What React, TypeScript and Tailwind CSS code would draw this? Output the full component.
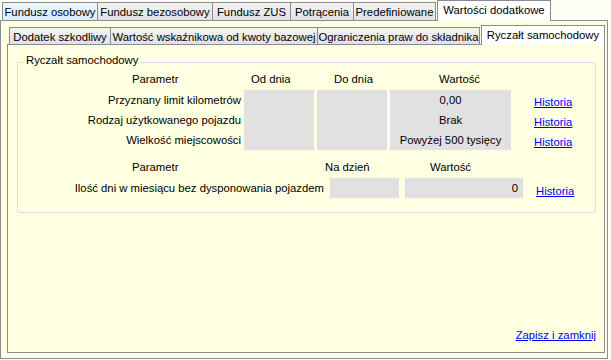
const outerTabs = [
  { label: 'Fundusz osobowy', w: 'w-[96px]', state: 'hover' },
  { label: 'Fundusz bezosobowy', w: 'w-[116px]', state: 'normal' },
  { label: 'Fundusz ZUS', w: 'w-[79px]', state: 'normal' },
  { label: 'Potrącenia', w: 'w-[64px]', state: 'normal' },
  { label: 'Predefiniowane', w: 'w-[83px]', state: 'normal' },
]

const innerTabs = [
  { label: 'Dodatek szkodliwy', w: 'w-[102px]' },
  { label: 'Wartość wskaźnikowa od kwoty bazowej', w: 'w-[208px]' },
  { label: 'Ograniczenia praw do składnika', w: 'w-[163px]' },
]

const rows = [
  { label: 'Przyznany limit kilometrów', value: '0,00' },
  { label: 'Rodzaj użytkowanego pojazdu', value: 'Brak' },
  { label: 'Wielkość miejscowości', value: 'Powyżej 500 tysięcy' },
]

const Link = ({ children }: { children: string }) => (
  <a href="#" className="text-[#0000FF] underline underline-offset-[1px] leading-[13px]">
    {children}
  </a>
)

export default function App() {
  return (
    <div className="w-[611px] h-[360px] bg-[#FFFFF6] text-black text-[11.3px] leading-[13px] font-['Liberation_Sans',Arial,sans-serif] overflow-hidden">
      {/* Outer tab strip */}
      <div className="relative z-10 flex items-end h-[20px] pl-[2px]">
        {outerTabs.map((t, i) => (
          <div
            key={t.label}
            className={`${t.w} ${i > 0 ? '-ml-px' : ''} h-[18px] flex items-center justify-center pt-[2px] border border-b-0 border-[#898C95] whitespace-nowrap ${
              t.state === 'hover'
                ? 'bg-gradient-to-b from-[#EAF6FD] to-[#D7EFFC]'
                : 'bg-gradient-to-b from-[#F4F4F4] to-[#E1E1E1]'
            }`}
          >
            {t.label}
          </div>
        ))}
        <div className="w-[114px] h-[21px] -mb-px ml-px flex items-center justify-center pb-[1px] border border-b-0 border-[#898C95] bg-white whitespace-nowrap">
          Wartości dodatkowe
        </div>
      </div>

      {/* Outer panel */}
      <div className="w-[608px] h-[339px] border border-[#898C95] bg-[#FFFFE1] flex flex-col">
        {/* Inner tab strip */}
        <div className="relative z-10 flex items-end h-[20px] mt-[3px] ml-[8px]">
          {innerTabs.map((t, i) => (
            <div
              key={t.label}
              className={`${t.w} ${i > 0 ? '-ml-px' : ''} h-[17px] flex items-center justify-center pt-[2px] border border-b-0 border-[#898C95] whitespace-nowrap bg-gradient-to-b from-[#F4F4F4] to-[#E1E1E1]`}
            >
              {t.label}
            </div>
          ))}
          <div className="w-[124px] h-[20px] -mb-px ml-px flex items-center justify-center pb-[1px] border border-b-0 border-[#898C95] bg-white whitespace-nowrap">
            Ryczałt samochodowy
          </div>
        </div>

        {/* Inner panel */}
        <div className="ml-[6px] w-[598px] h-[309px] border border-[#898C95] bg-[#FFFFE1] flex flex-col">
          {/* Group box */}
          <div className="relative ml-[9px] mt-[17px] w-[579px] h-[151px] border border-[#D5DFE5] rounded-[3px] flex flex-col">
            <span className="absolute left-[6px] -top-[9px] px-[2px] bg-[#FFFFE1]">Ryczałt samochodowy</span>

            {/* Header 1 */}
            <div className="mt-[8px] h-[17px] flex items-center">
              <span className="w-[233px] pl-[114px]">Parametr</span>
              <span className="w-[83px]">Od dnia</span>
              <span className="w-[105px]">Do dnia</span>
              <span>Wartość</span>
            </div>

            {/* Rows 1 */}
            <div className="mt-[2px] h-[60px] flex">
              <div className="w-[223px] flex flex-col text-right">
                {rows.map((r) => (
                  <div key={r.label} className="h-[20px] flex items-center justify-end whitespace-nowrap">
                    {r.label}
                  </div>
                ))}
              </div>
              <div className="ml-[3px] w-[70px] bg-[#E1E1E1]" />
              <div className="ml-[3px] w-[70px] bg-[#E1E1E1]" />
              <div className="ml-[3px] w-[121px] bg-[#E1E1E1] flex flex-col">
                {rows.map((r) => (
                  <div key={r.value} className="h-[20px] flex items-center justify-center whitespace-nowrap">
                    {r.value}
                  </div>
                ))}
              </div>
              <div className="ml-[23px] flex flex-col">
                {rows.map((r) => (
                  <div key={r.label} className="h-[20px] flex items-center pt-[4px]">
                    <Link>Historia</Link>
                  </div>
                ))}
              </div>
            </div>

            {/* Header 2 */}
            <div className="mt-[9px] h-[17px] flex items-center">
              <span className="w-[307px] pl-[114px]">Parametr</span>
              <span className="w-[105px]">Na dzień</span>
              <span>Wartość</span>
            </div>

            {/* Row 2 */}
            <div className="mt-[2px] h-[20px] flex">
              <div className="w-[306px] flex items-center justify-end pt-[1px] whitespace-nowrap">
                Ilość dni w miesiącu bez dysponowania pojazdem
              </div>
              <div className="ml-[6px] w-[69px] bg-[#E1E1E1]" />
              <div className="ml-[6px] w-[118px] bg-[#E1E1E1] flex items-center justify-end pr-[5px] pt-[1px]">
                0
              </div>
              <div className="ml-[13px] flex items-center pt-[6px]">
                <Link>Historia</Link>
              </div>
            </div>
          </div>

          <div className="mt-auto mb-[10px] mr-[8px] self-end">
            <Link>Zapisz i zamknij</Link>
          </div>
        </div>
      </div>
    </div>
  )
}
